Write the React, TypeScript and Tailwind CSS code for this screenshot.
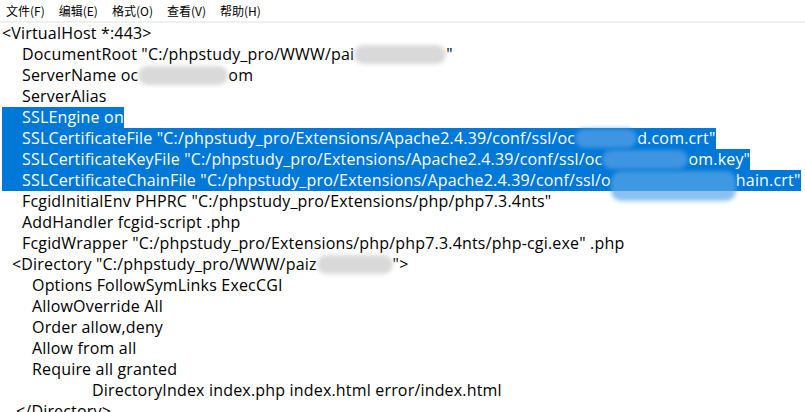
import React from "react";

function Blob({ w, b }: { w: string; b: string }) {
  return (
    <span className={`relative inline-block h-[21px] align-top ${w}`}>
      <span className={`absolute left-0 right-0 top-[1px] rounded-[10px] blur-[2px] ${b}`} />
    </span>
  );
}

function Line({ pad, children, sel }: { pad: string; children: React.ReactNode; sel?: boolean }) {
  return (
    <div className="flex h-[21px] items-start pl-[2px] whitespace-pre">
      <span
        className={`h-[21px] leading-[21px] ${pad} ${sel ? "bg-[#0078d7] text-white" : "text-black"}`}
      >
        {children}
      </span>
    </div>
  );
}

export default function App() {
  const menus = ["文件(F)", "编辑(E)", "格式(O)", "查看(V)", "帮助(H)"];
  return (
    <div className="w-[805px] h-[412px] overflow-hidden bg-white">
      <div className="flex h-[23px] items-center gap-[14px] pl-[6px] pt-[1px] border-b-2 border-[#f0f0f0] text-[12px] text-black font-['Noto_Sans_CJK_SC',sans-serif]">
        {menus.map((m) => (
          <span key={m}>{m}</span>
        ))}
      </div>
      <div className="text-[16px] tracking-[0.18px] font-['Open_Sans','Noto_Sans_CJK_SC',sans-serif]">
        <Line pad="pl-0">{"<VirtualHost *:443>"}</Line>
        <Line pad="pl-[20px]">
          {'DocumentRoot "C:/phpstudy_pro/WWW/pai'}
          <Blob w="w-[92px]" b="bottom-[1px] bg-[#d9d9d9]" />
          {'"'}
        </Line>
        <Line pad="pl-[20px]">
          {"ServerName oc"}
          <Blob w="w-[90px]" b="bottom-[1px] bg-[#d9d9d9]" />
          {"om"}
        </Line>
        <Line pad="pl-[20px]">{"ServerAlias"}</Line>
        <Line pad="pl-[20px]" sel>
          {"SSLEngine on"}
        </Line>
        <Line pad="pl-[20px]" sel>
          {'SSLCertificateFile "C:/phpstudy_pro/Extensions/Apache2.4.39/conf/ssl/oc'}
          <Blob w="w-[62px]" b="bottom-[1px] bg-[#3f95e2]" />
          {'d.com.crt"'}
        </Line>
        <Line pad="pl-[20px]" sel>
          {'SSLCertificateKeyFile "C:/phpstudy_pro/Extensions/Apache2.4.39/conf/ssl/oc'}
          <Blob w="w-[86px]" b="bottom-[1px] bg-[#3f95e2]" />
          {'om.key"'}
        </Line>
        <Line pad="pl-[20px]" sel>
          {'SSLCertificateChainFile "C:/phpstudy_pro/Extensions/Apache2.4.39/conf/ssl/o'}
          <Blob w="w-[125px]" b="bottom-[-10px] bg-[#5aa6e8] opacity-70" />
          {'hain.crt"'}
        </Line>
        <Line pad="pl-[20px]">{'FcgidInitialEnv PHPRC "C:/phpstudy_pro/Extensions/php/php7.3.4nts"'}</Line>
        <Line pad="pl-[20px]">{"AddHandler fcgid-script .php"}</Line>
        <Line pad="pl-[20px]">{'FcgidWrapper "C:/phpstudy_pro/Extensions/php/php7.3.4nts/php-cgi.exe" .php'}</Line>
        <Line pad="pl-[10px]">
          {'<Directory "C:/phpstudy_pro/WWW/paiz'}
          <Blob w="w-[76px]" b="bottom-[1px] bg-[#d9d9d9]" />
          {'">'}
        </Line>
        <Line pad="pl-[30px]">{"Options FollowSymLinks ExecCGI"}</Line>
        <Line pad="pl-[30px]">{"AllowOverride All"}</Line>
        <Line pad="pl-[30px]">{"Order allow,deny"}</Line>
        <Line pad="pl-[30px]">{"Allow from all"}</Line>
        <Line pad="pl-[30px]">{"Require all granted"}</Line>
        <Line pad="pl-[90px]">{"DirectoryIndex index.php index.html error/index.html"}</Line>
        <Line pad="pl-[14px]">{"</Directory>"}</Line>
      </div>
    </div>
  );
}
